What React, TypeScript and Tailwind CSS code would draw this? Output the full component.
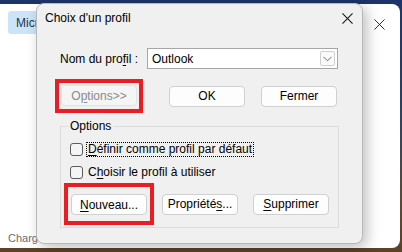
import React from "react";

const F = { fontFamily: '"Liberation Sans", Arial, sans-serif' };

function U({ children }: { children: React.ReactNode }) {
  return <span className="underline underline-offset-2 decoration-1">{children}</span>;
}

function Btn({
  children,
  className = "",
  disabled = false,
}: {
  children: React.ReactNode;
  className?: string;
  disabled?: boolean;
}) {
  return (
    <div
      className={
        "flex h-[21px] w-[76px] items-center justify-center rounded-[4px] border text-[12px] " +
        (disabled
          ? "border-[#e3e3e3] bg-[#f5f5f5] text-[#8a8a8a] "
          : "border-[#d0d0d0] bg-[#fdfdfd] text-black ") +
        className
      }
    >
      {children}
    </div>
  );
}

function XIcon({ size = 12, stroke = 1 }: { size?: number; stroke?: number }) {
  return (
    <svg width={size} height={size} viewBox="0 0 12 12">
      <path d="M0.5 0.5 L11.5 11.5 M11.5 0.5 L0.5 11.5" stroke="#1a1a1a" strokeWidth={stroke} />
    </svg>
  );
}

function Check() {
  return <div className="h-[13px] w-[13px] shrink-0 rounded-[3px] border border-[#5c5c5c] bg-[#f5f5f5]" />;
}

export default function App() {
  return (
    <div
      className="relative h-[252px] w-[402px] overflow-hidden bg-[linear-gradient(180deg,#1c3468_0%,#2a3f66_40%,#5a4a3a_80%,#5b4128_100%)]"
      style={F}
    >
      {/* back window */}
      <div className="absolute left-[-10px] top-[4px] flex h-[244px] w-[410px] flex-col justify-between rounded-[8px] bg-white pb-[2px] pl-[18px] pr-[15px] pt-[7px]">
        <div className="flex items-start justify-between">
          <div className="flex h-[23px] w-[40px] items-center rounded-[3px] bg-[#cce4f7] pl-[8px] text-[12px] text-[#1a3656]">
            Micr
          </div>
          <div className="mt-[8px]">
            <XIcon size={11} />
          </div>
        </div>
        <div className="text-[11px] text-[#6d6d6d]">Chargement</div>
      </div>

      {/* dialog */}
      <div className="absolute left-[36px] top-[3px] flex h-[241px] w-[327px] flex-col rounded-[8px] border border-[#b8b8b8] bg-[#f0f0f0] shadow-[4px_4px_14px_rgba(0,0,0,0.25)]">
        {/* title bar */}
        <div className="flex h-[27px] items-center justify-between pl-[8px] pr-[9px] pt-[1px]">
          <span className="text-[12px] text-black">Choix d'un profil</span>
          <XIcon size={11} stroke={1.2} />
        </div>

        {/* profile row */}
        <div className="mt-[17px] flex items-center pl-[23px]">
          <span className="w-[87px] text-[12px] text-black">
            Nom du pro<U>f</U>il :
          </span>
          <div className="flex h-[21px] w-[191px] items-center justify-between border border-[#a6a6a6] bg-white pl-[4px] pr-[2px]">
            <span className="text-[12px] text-black">Outlook</span>
            <div className="flex h-[15px] w-[15px] items-center justify-center rounded-[2px] border border-[#cfcfcf] bg-[#fbfbfb]">
              <svg width="9" height="6" viewBox="0 0 9 6">
                <path d="M0.5 0.8 L4.5 4.8 L8.5 0.8" fill="none" stroke="#6a6a6a" strokeWidth="1" />
              </svg>
            </div>
          </div>
        </div>

        {/* buttons row */}
        <div className="mt-[10px] flex items-center pl-[18px]">
          <div className="border-[4px] border-[#ec1c24] pb-[3px] pl-[2px] pr-[2px] pt-[2px]">
            <Btn disabled className="w-[76px]">
              O<U>p</U>tions&gt;&gt;
            </Btn>
          </div>
          <Btn className="ml-[26px]">OK</Btn>
          <Btn className="ml-[16px] w-[75px]">Fermer</Btn>
        </div>

        {/* group box */}
        <div className="relative ml-[23px] mt-[13px] h-[102px] w-[279px] border border-[#dcdcdc] pl-[9px] pt-[15px]">
          <span className="absolute left-[7px] top-[-9px] bg-[#f0f0f0] px-[2px] text-[12px] leading-[16px] text-black">
            Options
          </span>
          <div className="flex items-center gap-[3px]">
            <Check />
            <span className="border border-dotted border-black px-[1px] text-[12px] leading-[13px] text-black">
              <U>D</U>éfinir comme profil par défaut
            </span>
          </div>
          <div className="mt-[9px] flex items-center gap-[3px]">
            <Check />
            <span className="px-[2px] text-[12px] leading-[13px] text-black">
              C<U>h</U>oisir le profil à utiliser
            </span>
          </div>
          <div className="ml-[-6px] mt-[4px] flex items-center">
            <div className="border-[4px] border-[#ec1c24] pb-[6px] pl-[3px] pr-[3px] pt-[7px]">
              <Btn className="h-[20px] w-[76px]">
                <U>N</U>ouveau...
              </Btn>
            </div>
            <Btn className="ml-[8px] h-[20px] w-[76px]">
              Propriété<U>s</U>...
            </Btn>
            <Btn className="ml-[15px] h-[20px] w-[76px]">
              <U>S</U>upprimer
            </Btn>
          </div>
        </div>
      </div>
    </div>
  );
}
